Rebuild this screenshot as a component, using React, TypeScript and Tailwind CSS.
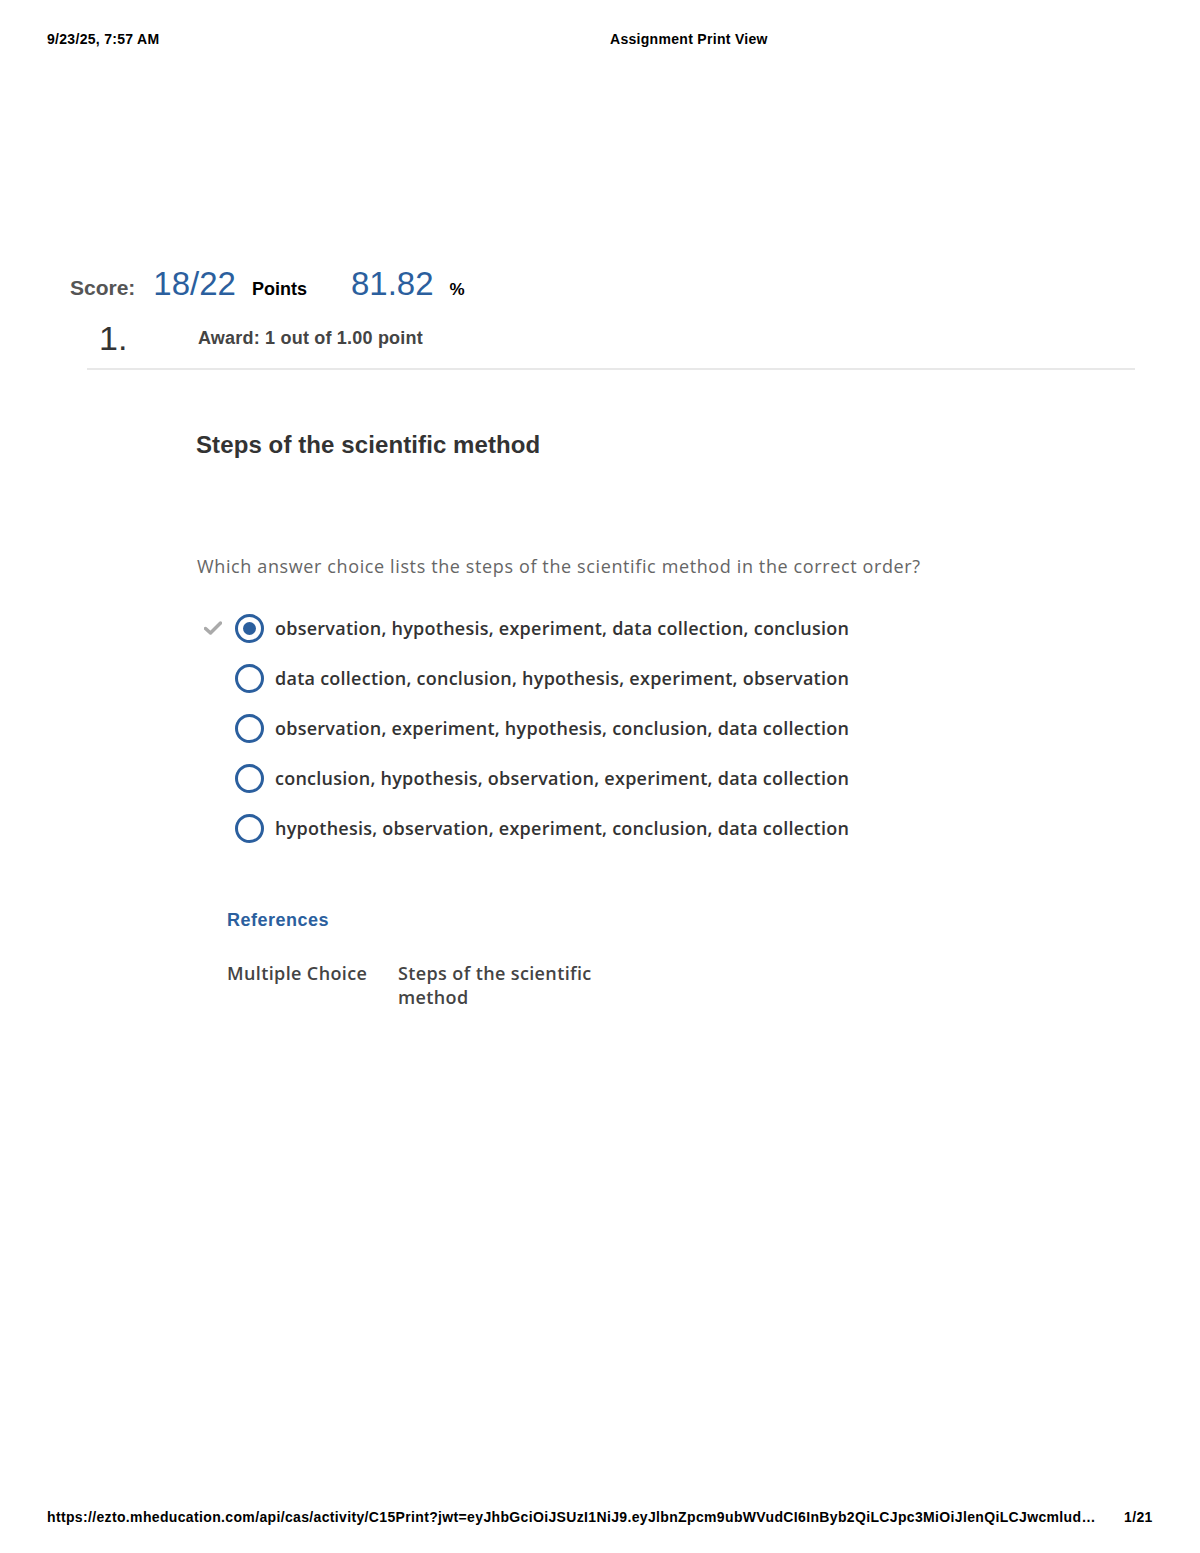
const options = [
  "observation, hypothesis, experiment, data collection, conclusion",
  "data collection, conclusion, hypothesis, experiment, observation",
  "observation, experiment, hypothesis, conclusion, data collection",
  "conclusion, hypothesis, observation, experiment, data collection",
  "hypothesis, observation, experiment, conclusion, data collection",
];

const url =
  "https://ezto.mheducation.com/api/cas/activity/C15Print?jwt=eyJhbGciOiJSUzI1NiJ9.eyJlbnZpcm9ubWVudCI6InByb2QiLCJpc3MiOiJlenQiLCJwcmlud…";

const Radio = ({ checked }: { checked: boolean }) => (
  <span className="flex h-[29px] w-[29px] items-center justify-center rounded-full border-[3px] border-[#2b5f9e] bg-white">
    {checked && <span className="h-[13px] w-[13px] rounded-full bg-[#2b5f9e]" />}
  </span>
);

const Check = () => (
  <svg width="18" height="14" viewBox="0 0 18 14" className="text-[#aaaaaa]">
    <path d="M1.5 7.5 L6.5 12 L16.5 2" fill="none" stroke="currentColor" strokeWidth="3.5" strokeLinecap="round" strokeLinejoin="round" />
  </svg>
);

export default function App() {
  return (
    <div className="flex min-h-[1553px] flex-col bg-white font-['Liberation_Sans',Arial,sans-serif] text-[#333]">
      <header className="flex pl-[47px] pt-[31px] text-[14px] font-bold leading-4 tracking-[0.3px] text-black">
        <span className="w-[563px]">9/23/25, 7:57 AM</span>
        <span>Assignment Print View</span>
      </header>

      <main className="flex flex-col">
        <div className="mt-[212px] flex h-10 items-baseline pl-[70px]">
          <span className="text-[21px] font-bold text-[#555]">Score:</span>
          <span className="ml-[18px] text-[33px] text-[#2b5f9e]">18/22</span>
          <span className="ml-[16px] text-[18px] font-bold text-black">Points</span>
          <span className="ml-[44px] text-[33px] text-[#2b5f9e]">81.82</span>
          <span className="ml-[16px] text-[17px] font-bold text-black">%</span>
        </div>

        <div className="mt-[19px] flex h-10 items-center pl-[99px]">
          <span className="w-[99px] text-[34px] leading-10 text-[#333]">1.</span>
          <span className="text-[18px] font-bold tracking-[0.2px] text-[#444]">Award: 1 out of 1.00 point</span>
        </div>

        <div className="ml-[87px] mr-[65px] mt-[10px] h-[2px] bg-[#e8e8e8]" />

        <h1 className="ml-[196px] mt-[59px] text-[24px] font-bold leading-8 tracking-[0.1px] text-[#333]">
          Steps of the scientific method
        </h1>

        <p className="ml-[197px] mt-[93px] font-['Open_Sans',sans-serif] text-[18px] font-medium leading-6 tracking-[0.62px] text-[#666]">
          Which answer choice lists the steps of the scientific method in the correct order?
        </p>

        <ul className="ml-[204px] mt-[25px] flex flex-col">
          {options.map((o, i) => (
            <li key={o} className="flex h-[50px] items-center">
              <span className="flex w-[31px] items-center">{i === 0 && <Check />}</span>
              <Radio checked={i === 0} />
              <span className="ml-[11px] font-['Open_Sans',sans-serif] text-[18px] font-semibold tracking-[0.25px] text-[#333]">
                {o}
              </span>
            </li>
          ))}
        </ul>

        <div className="ml-[227px] mt-[55px] text-[18px] font-bold leading-6 tracking-[0.5px] text-[#2b5f9e]">
          References
        </div>

        <div className="ml-[227px] mt-[29px] flex font-['Open_Sans',sans-serif] text-[18px] font-semibold leading-6 tracking-[0.38px] text-[#444]">
          <span className="w-[171px]">Multiple Choice</span>
          <span className="w-[205px]">Steps of the scientific method</span>
        </div>
      </main>

      <footer className="mt-auto flex pb-[28px] pl-[47px] text-[14px] font-bold leading-4 tracking-[0.35px] text-black">
        <span className="w-[1054px] whitespace-nowrap">{url}</span>
        <span className="ml-[23px]">1/21</span>
      </footer>
    </div>
  );
}
